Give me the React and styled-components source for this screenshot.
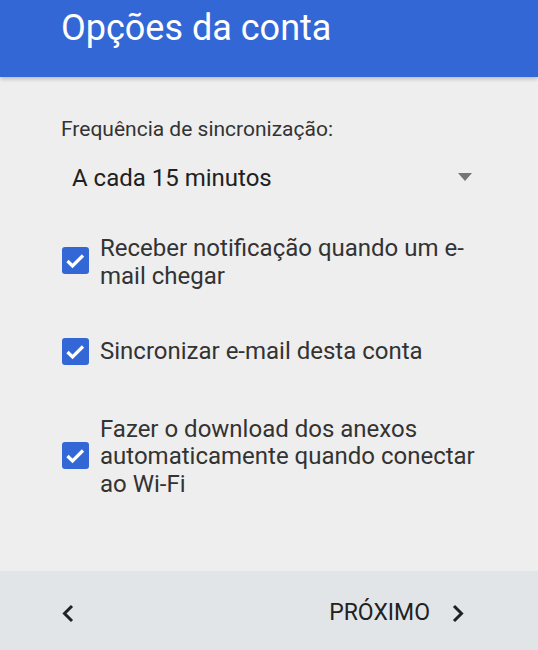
import React from "react";
import styled, { createGlobalStyle } from "styled-components";

const GlobalStyle = createGlobalStyle`
  html, body {
    margin: 0;
    padding: 0;
    background: #eeeeee;
  }
  body {
    font-family: Roboto, "Noto Sans", sans-serif;
  }
`;

const Page = styled.div`
  display: flex;
  flex-direction: column;
  height: 100vh;
  background: #eeeeee;
`;

const Header = styled.header`
  height: 77px;
  flex-shrink: 0;
  box-sizing: border-box;
  padding: 7px 0 0 61px;
  background: #3367d6;
  box-shadow: 0 2px 4px rgba(0, 0, 0, 0.22);
  position: relative;
  z-index: 1;
`;

const Title = styled.h1`
  margin: 0;
  color: #fff;
  font-size: 36px;
  line-height: 42px;
  font-weight: 400;
`;

const Body = styled.main`
  flex: 1;
  padding: 38px 61px 0 61px;
`;

const Label = styled.div`
  color: #333;
  font-size: 21px;
  line-height: 28px;
`;

const Select = styled.div`
  display: flex;
  align-items: center;
  justify-content: space-between;
  margin: 19px 0 41px 11px;
  padding-right: 5px;
  color: #212121;
  font-size: 24px;
  line-height: 32px;
`;

const Caret = styled.span`
  width: 0;
  height: 0;
  border-left: 7px solid transparent;
  border-right: 7px solid transparent;
  border-top: 8px solid #757575;
  margin-top: -2px;
`;

const Option = styled.label`
  display: flex;
  align-items: center;
  gap: 11px;
  margin-bottom: ${p => p.gap}px;
`;

const Box = styled.span`
  flex-shrink: 0;
  width: 27px;
  height: 27px;
  margin: 0 0 ${p => p.lift}px 1px;
  border-radius: 3px;
  background: #3367d6;
  display: flex;
  align-items: center;
  justify-content: center;
`;

const OptionText = styled.span`
  color: #333;
  font-size: 24px;
  line-height: 27.5px;
`;

const Footer = styled.footer`
  height: 79px;
  flex-shrink: 0;
  background: #e1e5e8;
  display: flex;
  align-items: center;
  justify-content: space-between;
  padding: 5px 74px 0 62px;
  box-sizing: border-box;
`;

const NavButton = styled.div`
  display: flex;
  align-items: center;
  gap: 22px;
  color: #212121;
  font-size: 23px;
  line-height: 28px;
`;

const Check = () => (
  <svg width="27" height="27" viewBox="0 0 27 27">
    <polyline points="5.5,14 10.5,19 21,8.5" fill="none" stroke="#fff" strokeWidth="3.2" />
  </svg>
);

const Chevron = ({ left }) => (
  <svg width="12" height="19" viewBox="0 0 12 19">
    <polyline
      points={left ? "10,2 2.5,9.5 10,17" : "2,2 9.5,9.5 2,17"}
      fill="none"
      stroke="#212121"
      strokeWidth="3"
    />
  </svg>
);

const options = [
  { text: "Receber notificação quando um e-mail chegar", gap: 48, lift: 4 },
  { text: "Sincronizar e-mail desta conta", gap: 50, lift: 0 },
  { text: "Fazer o download dos anexos automaticamente quando conectar ao Wi-Fi", gap: 0, lift: 2 }
];

export default function App() {
  return (
    <Page>
      <GlobalStyle />
      <Header>
        <Title>Opções da conta</Title>
      </Header>
      <Body>
        <Label>Frequência de sincronização:</Label>
        <Select>
          <span>A cada 15 minutos</span>
          <Caret />
        </Select>
        {options.map(o => (
          <Option key={o.text} gap={o.gap}>
            <Box lift={o.lift}>
              <Check />
            </Box>
            <OptionText>{o.text}</OptionText>
          </Option>
        ))}
      </Body>
      <Footer>
        <NavButton>
          <Chevron left />
        </NavButton>
        <NavButton>
          PRÓXIMO
          <Chevron />
        </NavButton>
      </Footer>
    </Page>
  );
}
